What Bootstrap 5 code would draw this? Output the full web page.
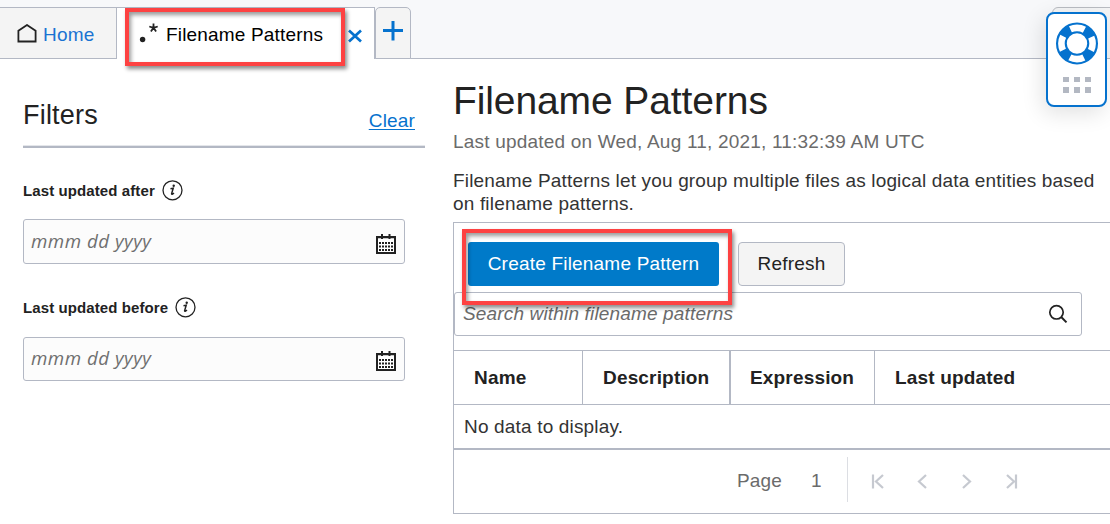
<!DOCTYPE html>
<html lang="en">
<head>
<meta charset="utf-8">
<title>Filename Patterns</title>
<link href="https://cdn.jsdelivr.net/npm/bootstrap@5.3.0/dist/css/bootstrap.min.css" rel="stylesheet">
<style>
:root{--line:#b3b8c4;--ink:#222;--blue:#0572ce}
body{font-family:"Liberation Sans",Arial,sans-serif;font-size:19px;letter-spacing:.17px;line-height:23px;color:var(--ink);height:524px;overflow:hidden;position:relative}
.tabbar{height:59px;padding-top:7px;background:#f7f8fa;box-shadow:inset 0 -1px var(--line)}
.tab{height:52px;border-top:1px solid var(--line);border-right:1px solid var(--line)}
.tab-home{width:117px;background:#f4f4f4;border-bottom:1px solid var(--line);padding-left:17px;color:#1a73d2}
.tab-home svg{margin-top:2px}
.tab-home span{margin-left:6px;padding-top:2px}
.tab-active{width:258px;background:#fff;padding-left:22px;color:#000}
.tab-active .tab-text{margin-left:6px;padding-top:2px}
.tab-close{margin:4px 12px 0 auto}
.tab-add{width:36px;border:1px solid var(--line);border-radius:5px 5px 0 0;background:#f4f4f4}
.mark-box{position:absolute;border:4px solid #fd4242;box-shadow:2px 3px 4px rgba(0,0,0,.45),inset 2px 3px 4px rgba(0,0,0,.4);z-index:3;pointer-events:none}
.mark-tab{left:8px;top:0;width:220px;height:58px}
.mark-create{left:-6px;top:-13px;width:270px;height:76px}
.filters{width:453px;padding:37px 28px 0 23px}
.filters-head{height:52px;border-bottom:2px solid var(--line);box-shadow:inset 0 -1px #e4e6ea;padding-right:10px}
.filters h2{font-size:27px;line-height:38px;letter-spacing:.2px}
.clear-link{color:var(--blue);text-decoration:underline;text-underline-offset:2px;text-decoration-thickness:1px;margin-top:13px}
.field-label{font-size:15px;font-weight:700;letter-spacing:.1px;height:22px;margin-top:31px}
.field-label svg{margin-left:7px}
.date-field{width:382px;height:45px;border:1px solid var(--line);border-radius:3px;background:#fcfcfc;padding:0 8px 0 7px;margin-top:18px}
.date-field + .field-label{margin-top:32px}
.field-label ~ .field-label + .date-field{height:44px;margin-top:19px}
.date-field span{font-family:"Open Sans","Noto Sans",sans-serif;font-style:italic;color:#6f6f6f;font-size:18.8px;letter-spacing:.48px;padding-bottom:1px}
.date-field svg{margin-top:4px}
.main-pane{padding-top:19px}
.main-pane h1{font-size:39px;line-height:46px;letter-spacing:-.1px}
.updated{color:#6b6b6b;margin-top:6px;letter-spacing:.2px}
.intro{margin-top:16px;color:#333;width:657px;height:46px}
.panel{margin-top:7px;border:1px solid var(--line);border-right:0;height:292px}
.toolbar{padding:19px 0 0 14px;height:69px}
.act{height:44px;border-radius:3px;padding:0;letter-spacing:.2px;font-size:19px}
.act-create{width:251px;background:#007ac9;color:#fff}
.act-refresh{width:107px;margin-left:19px;background:#f4f4f4;border:1px solid var(--line);color:#222;border-radius:4px}
.search{width:628px;height:44px;border:1px solid var(--line);border-radius:3px;padding:0 13px 0 8px}
.search span{font-style:italic;color:#6b6b6b;padding-bottom:2px;letter-spacing:.16px}
.head-row{margin-top:14px;height:55px;border-top:1px solid var(--line);border-bottom:1px solid var(--line);font-weight:700}
.head-row div{padding-left:20px;border-right:1px solid var(--line)}
.empty{height:45px;border-bottom:2px solid var(--line);padding-left:10px;color:#333}
.pager{height:60px;padding:0 0 0 283px;color:#6b6b6b}
.pager .rule{height:45px;border-left:1px solid #dcdee3;margin:-2px 0 0 25px}
.col-name{width:129px}
.col-desc{width:148px;border-right-width:2px !important}
.head-row .col-expr{width:144px;padding-left:19px}
.helper{position:absolute;left:1046px;top:12px;width:61px;height:95px;border:2px solid var(--blue);border-radius:8px;background:#fff;box-shadow:-3px 6px 22px rgba(0,0,0,.12);z-index:5}
.helper-back{position:absolute;left:1052px;top:7px;width:70px;height:52px;border:1px solid #b9bcc2;border-radius:6px 0 0 0;background:#f4f5f6;z-index:4}
svg{display:block;flex:none}
</style>
</head>
<body>
<header class="tabbar d-flex">
  <div class="tab tab-home d-flex align-items-center">
    <svg width="20" height="20" viewBox="0 0 20 20" fill="none" stroke="#222" stroke-width="1.800"><path d="M1.400 17.500V6.700L10 1l8.600 5.700v10.800z"/></svg>
    <span>Home</span>
  </div>
  <div class="tab tab-active d-flex align-items-center position-relative">
    <svg width="21" height="24" viewBox="0 0 21 24"><circle cx="3.600" cy="17.500" r="2.700" fill="#222"/><path d="M14.500 5.800V1.400M14.500 5.800l-4.200-1.300M14.500 5.800l4.200-1.300M14.500 5.800l-2.600 3.700M14.500 5.800l2.600 3.700" stroke="#222" stroke-width="1.800"/></svg>
    <span class="tab-text">Filename Patterns</span>
    <svg class="tab-close" width="14" height="14" viewBox="0 0 14 14" stroke="#0572ce" stroke-width="2.700"><path d="M1 1.500l12 11M13 1.500L1 12.500"/></svg>
    <div class="mark-box mark-tab"></div>
  </div>
  <div class="tab tab-add d-flex justify-content-center">
    <svg class="mt-2" width="20" height="28" viewBox="0 0 20 28" stroke="#0572ce" stroke-width="3"><path d="M0 14.500h20M10 5v19.500"/></svg>
  </div>
</header>
<div class="d-flex">
  <aside class="filters flex-shrink-0">
    <div class="filters-head d-flex justify-content-between align-items-start">
      <h2 class="m-0 fw-normal">Filters</h2>
      <a class="clear-link" href="#">Clear</a>
    </div>
    <div class="field-label d-flex align-items-center"><span>Last updated after</span>
      <svg width="22" height="22" viewBox="0 0 22 22"><circle cx="10.500" cy="11.300" r="9.500" fill="none" stroke="#222" stroke-width="1.300"/><path d="M8.500 9.800l2.700-.6-1.600 5.600q0 1.200 2.400-.8" fill="none" stroke="#222" stroke-width="1.500"/><circle cx="11.700" cy="6.700" r="1.200" fill="#222"/></svg></div>
    <div class="date-field d-flex align-items-center justify-content-between"><span>mmm dd yyyy</span>
      <svg width="20" height="22" viewBox="0 0 20 22"><path d="M1 4h18v16H1z" fill="#fff" stroke="#222" stroke-width="2"/><path d="M1 4.200h18M6 1v5M13.500 1v5" stroke="#222" stroke-width="2"/><path d="M3 10h14M3 13.500h14M3 17h14" stroke="#222" stroke-width="2" stroke-dasharray="2 1"/></svg></div>
    <div class="field-label d-flex align-items-center"><span>Last updated before</span>
      <svg width="22" height="22" viewBox="0 0 22 22"><circle cx="10.500" cy="11.300" r="9.500" fill="none" stroke="#222" stroke-width="1.300"/><path d="M8.500 9.800l2.700-.6-1.600 5.600q0 1.200 2.400-.8" fill="none" stroke="#222" stroke-width="1.500"/><circle cx="11.700" cy="6.700" r="1.200" fill="#222"/></svg></div>
    <div class="date-field d-flex align-items-center justify-content-between"><span>mmm dd yyyy</span>
      <svg width="20" height="22" viewBox="0 0 20 22"><path d="M1 4h18v16H1z" fill="#fff" stroke="#222" stroke-width="2"/><path d="M1 4.200h18M6 1v5M13.500 1v5" stroke="#222" stroke-width="2"/><path d="M3 10h14M3 13.500h14M3 17h14" stroke="#222" stroke-width="2" stroke-dasharray="2 1"/></svg></div>
  </aside>
  <main class="main-pane flex-grow-1">
    <h1 class="m-0 fw-normal">Filename Patterns</h1>
    <div class="updated">Last updated on Wed, Aug 11, 2021, 11:32:39 AM UTC</div>
    <div class="intro">Filename Patterns let you group multiple files as logical data entities based<br>on filename patterns.</div>
    <section class="panel">
      <div class="toolbar d-flex">
        <div class="position-relative">
          <button class="btn act act-create border-0">Create Filename Pattern</button>
          <div class="mark-box mark-create"></div>
        </div>
        <button class="btn act act-refresh">Refresh</button>
      </div>
      <div class="search d-flex align-items-center justify-content-between"><span>Search within filename patterns</span>
        <svg width="20" height="20" viewBox="0 0 20 20" fill="none" stroke="#222" stroke-width="1.700"><circle cx="8.500" cy="8.300" r="6.700"/><path d="M13.200 13l5.300 5.400" stroke-width="2"/></svg></div>
      <div class="head-row d-flex">
        <div class="col-name d-flex align-items-center">Name</div>
        <div class="col-desc d-flex align-items-center">Description</div>
        <div class="col-expr d-flex align-items-center">Expression</div>
        <div class="d-flex align-items-center border-0">Last updated</div>
      </div>
      <div class="empty d-flex align-items-center">No data to display.</div>
      <div class="pager d-flex align-items-center">
        <span>Page</span><span style="margin-left:29px">1</span>
        <div class="rule"></div>
        <svg width="180" height="20" viewBox="0 0 180 20" fill="none" stroke="#c6c9d0" stroke-width="2.200"><path d="M25 4.500v14M35 5L28 11.500l7 6.500M78 5L71 11.500l7 6.500M115 5l7 6.500-7 6.500M159 5l7 6.500-7 6.500M168 4.500v14"/></svg>
      </div>
    </section>
  </main>
</div>
<div class="helper-back"></div>
<div class="helper">
  <svg width="57" height="91" viewBox="0 0 57 91">
    <circle cx="29" cy="29.500" r="15.600" fill="none" stroke="#0572ce" stroke-width="10.800"/>
    <circle cx="29" cy="29.500" r="15.600" fill="none" stroke="#fff" stroke-width="6.600" stroke-dasharray="14.500 10" stroke-dashoffset="7.250"/>
    <path fill="#b3b8c2" d="M15 63h6v5h-6zM26 63h6v5h-6zM37 63h6v5h-6zM15 73h6v6h-6zM26 73h6v6h-6zM37 73h6v6h-6z"/>
  </svg>
</div>
<script src="https://cdn.jsdelivr.net/npm/bootstrap@5.3.0/dist/js/bootstrap.bundle.min.js"></script>
</body>
</html>
